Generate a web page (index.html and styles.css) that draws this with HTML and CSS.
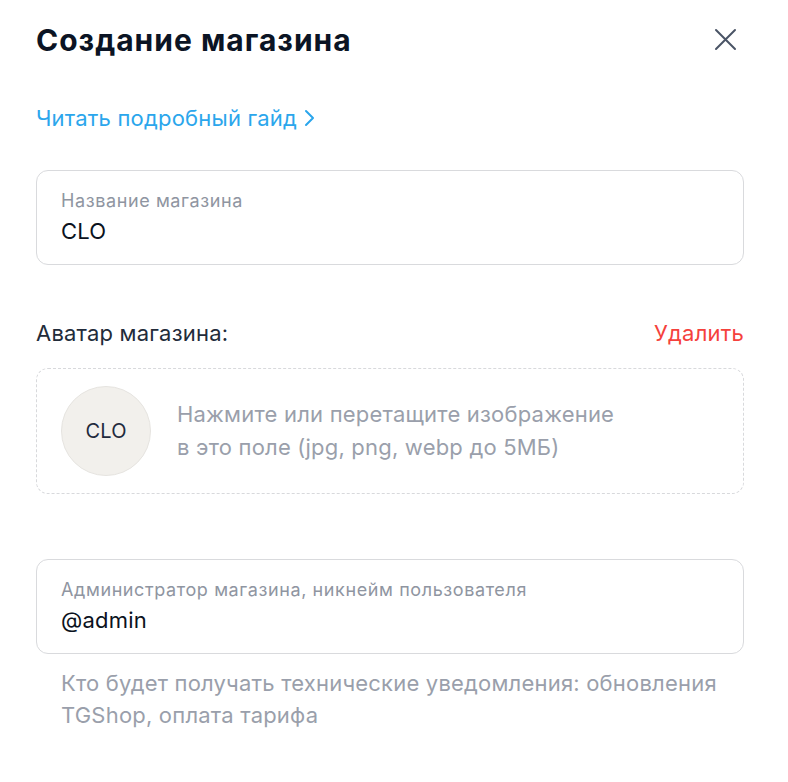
FILE: index.html
```html
<!DOCTYPE html>
<html lang="ru">
<head>
    <meta charset="UTF-8">
    <meta name="viewport" content="width=device-width, initial-scale=1.0">
    <title>Создание магазина</title>
    <link rel="stylesheet" href="styles.css">
</head>
<body>
    <div class="modal">
        <div class="modal-header">
            <h1 class="modal-title">Создание магазина</h1>
            <button class="close-btn" aria-label="Закрыть">
                <svg width="36" height="36" viewBox="0 0 36 36" fill="none">
                    <path d="M8 8 L27 27 M27 8 L8 27" stroke="#4a5466" stroke-width="2" stroke-linecap="round"/>
                </svg>
            </button>
        </div>

        <a class="guide-link" href="#">
            Читать подробный гайд
            <svg width="12" height="18" viewBox="0 0 12 18" fill="none">
                <path d="M3 2 L10 9 L3 16" stroke="currentColor" stroke-width="2" stroke-linecap="round" stroke-linejoin="round"/>
            </svg>
        </a>

        <div class="field">
            <div class="field-label">Название магазина</div>
            <div class="field-value">CLO</div>
        </div>

        <div class="section-row">
            <span class="section-label">Аватар магазина:</span>
            <a class="delete-link" href="#">Удалить</a>
        </div>

        <div class="dropzone">
            <div class="avatar">CLO</div>
            <div class="dropzone-text">Нажмите или перетащите изображение<br>в это поле (jpg, png, webp до 5МБ)</div>
        </div>

        <div class="field field-admin">
            <div class="field-label">Администратор магазина, никнейм пользователя</div>
            <div class="field-value">@admin</div>
        </div>
        <p class="field-hint">Кто будет получать технические уведомления: обновления TGShop, оплата тарифа</p>
    </div>
</body>
</html>
```

FILE: styles.css
```css
* {
    margin: 0;
    padding: 0;
    box-sizing: border-box;
}

body {
    font-family: 'Inter', 'Noto Sans', sans-serif;
    background: #ffffff;
    color: #0b1220;
    letter-spacing: 0.2px;
}

.modal {
    padding: 22px 44px 0 36px;
    display: flex;
    flex-direction: column;
}

.modal-header {
    display: flex;
    align-items: center;
    justify-content: space-between;
}

.modal-title {
    font-size: 30px;
    line-height: 36px;
    font-weight: 700;
    letter-spacing: 1px;
    color: #0b1424;
}

.close-btn {
    width: 36px;
    height: 36px;
    border: none;
    background: none;
    cursor: pointer;
    display: flex;
}

.guide-link {
    margin-top: 46px;
    display: flex;
    align-items: center;
    gap: 6px;
    font-size: 22px;
    line-height: 28px;
    color: #2ba6ec;
    text-decoration: none;
    align-self: flex-start;
}

.field {
    margin-top: 38px;
    border: 1px solid #d9dadd;
    border-radius: 12px;
    padding: 18px 24px 19px;
}

.field-label {
    font-size: 18px;
    line-height: 24px;
    letter-spacing: 0.6px;
    color: #8f95a1;
}

.field-value {
    margin-top: 4px;
    font-size: 22px;
    line-height: 28px;
    color: #0b1220;
}

.section-row {
    margin-top: 54px;
    display: flex;
    justify-content: space-between;
    align-items: center;
    font-size: 22px;
    line-height: 28px;
}

.section-label {
    color: #222b3a;
}

.delete-link {
    color: #f5413c;
    text-decoration: none;
}

.dropzone {
    margin-top: 21px;
    border: 1px dashed #d8d9dc;
    border-radius: 12px;
    padding: 17px 24px;
    display: flex;
    align-items: center;
    gap: 26px;
}

.avatar {
    width: 90px;
    height: 90px;
    flex-shrink: 0;
    border-radius: 50%;
    background: #f2f0ec;
    border: 1px solid #e6e4e0;
    display: flex;
    align-items: center;
    justify-content: center;
    font-size: 20px;
    color: #1f2a3c;
}

.dropzone-text {
    font-size: 22px;
    line-height: 33px;
    color: #9a9fab;
}

.field-admin {
    margin-top: 65px;
}

.field-hint {
    margin-top: 13px;
    padding-left: 25px;
    font-size: 22px;
    line-height: 32px;
    color: #9a9fab;
}
```
